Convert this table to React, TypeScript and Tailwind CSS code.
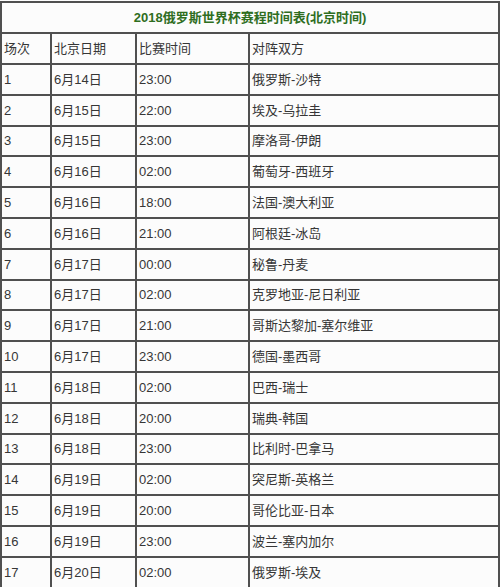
import React from "react";

const rows: [string, string, string, string][] = [
  ["1", "6月14日", "23:00", "俄罗斯-沙特"],
  ["2", "6月15日", "22:00", "埃及-乌拉圭"],
  ["3", "6月15日", "23:00", "摩洛哥-伊朗"],
  ["4", "6月16日", "02:00", "葡萄牙-西班牙"],
  ["5", "6月16日", "18:00", "法国-澳大利亚"],
  ["6", "6月16日", "21:00", "阿根廷-冰岛"],
  ["7", "6月17日", "00:00", "秘鲁-丹麦"],
  ["8", "6月17日", "02:00", "克罗地亚-尼日利亚"],
  ["9", "6月17日", "21:00", "哥斯达黎加-塞尔维亚"],
  ["10", "6月17日", "23:00", "德国-墨西哥"],
  ["11", "6月18日", "02:00", "巴西-瑞士"],
  ["12", "6月18日", "20:00", "瑞典-韩国"],
  ["13", "6月18日", "23:00", "比利时-巴拿马"],
  ["14", "6月19日", "02:00", "突尼斯-英格兰"],
  ["15", "6月19日", "20:00", "哥伦比亚-日本"],
  ["16", "6月19日", "23:00", "波兰-塞内加尔"],
  ["17", "6月20日", "02:00", "俄罗斯-埃及"],
];

const cell = "border-2 border-[#505050] px-[2px] text-left align-middle whitespace-nowrap";

export default function App() {
  return (
    <div className="w-[500px] h-[587px] overflow-hidden bg-[#fcfcfc] pt-[1px]">
      <table
        className="w-[498px] table-fixed border-collapse text-[13px] text-[#363636] leading-none"
        style={{ fontFamily: '"Liberation Sans", "Noto Sans CJK SC", sans-serif' }}
      >
        <colgroup>
          <col className="w-[50px]" />
          <col className="w-[85px]" />
          <col className="w-[113px]" />
          <col className="w-[250px]" />
        </colgroup>
        <tbody>
          <tr className="h-[31px]">
            <td
              colSpan={4}
              className="border-2 border-[#505050] text-center align-middle font-bold text-[13px] text-[#2f6e1f]"
            >
              2018俄罗斯世界杯赛程时间表(北京时间)
            </td>
          </tr>
          <tr className="h-[31px]">
            <td className={cell}>场次</td>
            <td className={cell}>北京日期</td>
            <td className={cell}>比赛时间</td>
            <td className={cell}>对阵双方</td>
          </tr>
          {rows.map((r) => (
            <tr key={r[0]} className="h-[30.8px]">
              <td className={cell}>{r[0]}</td>
              <td className={cell}>{r[1]}</td>
              <td className={cell}>{r[2]}</td>
              <td className={cell}>{r[3]}</td>
            </tr>
          ))}
        </tbody>
      </table>
    </div>
  );
}
